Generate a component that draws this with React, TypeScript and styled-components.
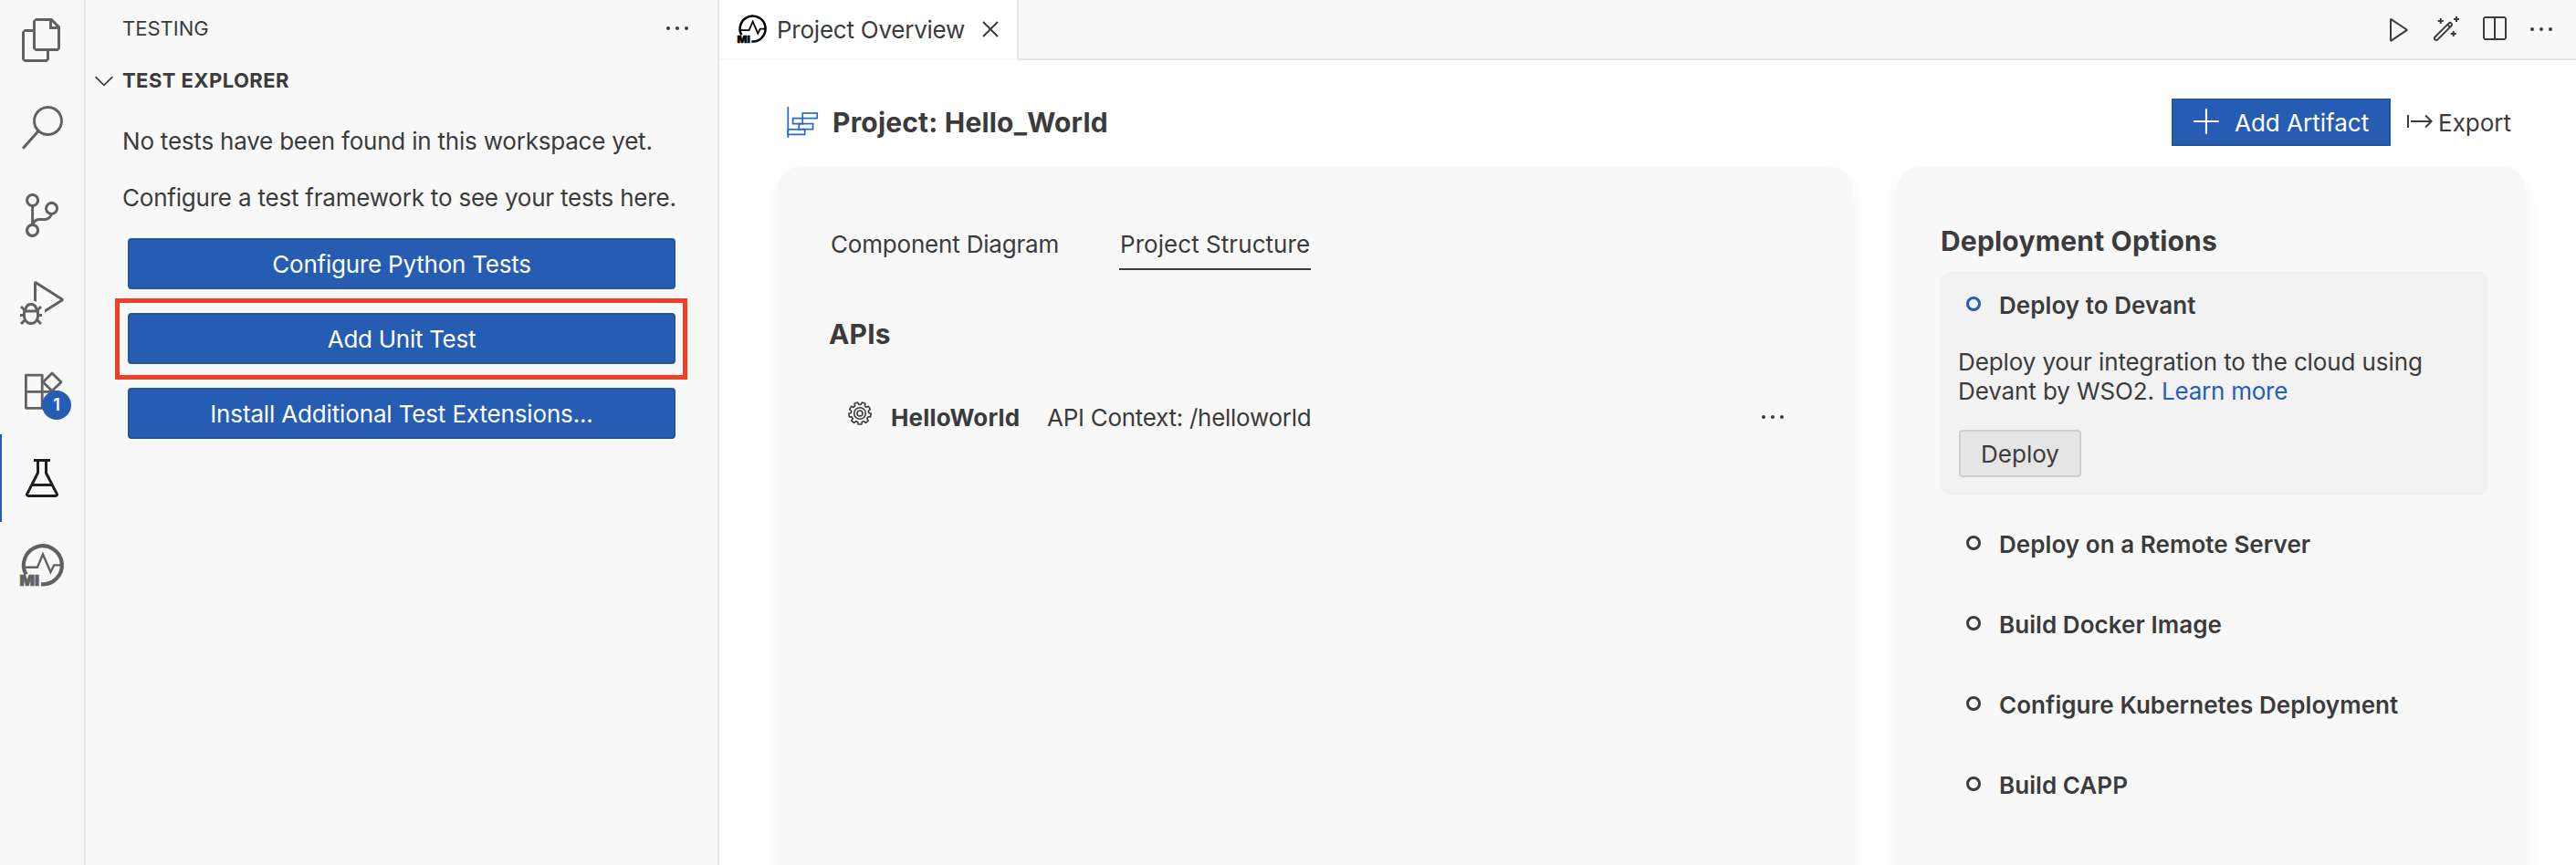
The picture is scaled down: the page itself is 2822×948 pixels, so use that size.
import React from "react";
import styled, { createGlobalStyle } from "styled-components";
import {
  VscAdd,
  VscBeaker,
  VscChevronDown,
  VscClose,
  VscDebugAlt,
  VscEllipsis,
  VscExport,
  VscFiles,
  VscPlay,
  VscSearch,
  VscSourceControl,
  VscSplitHorizontal,
  VscWand,
} from "react-icons/vsc";

const color = {
  text: "#3b3b3b",
  icon: "#616161",
  active: "#1f1f1f",
  border: "#e5e5e5",
  side: "#f8f8f8",
  accent: "#265db3",
  accentEdge: "#2455a1",
  link: "#265db8",
  mark: "#ec4128",
};

const GlobalStyle = createGlobalStyle`
  *, *::before, *::after { box-sizing: border-box; }
  body {
    margin: 0;
    background: #ffffff;
    color: ${color.text};
    font-family: Inter, "Liberation Sans", sans-serif;
    font-size: 26px;
  }
  h1, h2, p { margin: 0; }
  button { font: inherit; padding: 0; margin: 0; }
  svg { display: block; flex: none; overflow: visible; }
`;

const Workbench = styled.div`
  display: flex;
  width: 2822px;
  height: 948px;
  overflow: hidden;
`;

/* Activity bar */

const ActivityBar = styled.nav`
  display: flex;
  flex-direction: column;
  flex: none;
  width: 94px;
  height: 948px;
  overflow: hidden;
  background: ${color.side};
  border-right: 2px solid ${color.border};
`;

const ActivityList = styled.div`
  display: flex;
  flex-direction: column;
  margin-top: -4px;
`;

const ActivityItem = styled.div<{ $active?: boolean }>`
  position: relative;
  display: flex;
  align-items: center;
  justify-content: center;
  height: 96px;
  color: ${(p) => (p.$active ? color.active : color.icon)};
  box-shadow: ${(p) => (p.$active ? `inset 2px 0 0 ${color.accent}` : "none")};
`;

const Badge = styled.span`
  position: absolute;
  left: 46px;
  top: 48px;
  width: 32px;
  height: 32px;
  border-radius: 50%;
  background: ${color.accent};
  color: #ffffff;
  font-size: 18px;
  font-weight: 600;
  line-height: 32px;
  text-align: center;
`;

/* Testing sidebar */

const Sidebar = styled.aside`
  flex: none;
  width: 694px;
  background: ${color.side};
  border-right: 2px solid ${color.border};
`;

const SidebarHeader = styled.header`
  display: flex;
  align-items: center;
  justify-content: space-between;
  height: 62px;
  padding: 0 28px 0 40px;
  font-size: 22px;
`;

const SectionHeader = styled.div`
  display: flex;
  align-items: center;
  gap: 4px;
  height: 52px;
  padding-left: 4px;
  font-size: 22px;
  font-weight: 700;
  letter-spacing: 0.43px;
`;

const Welcome = styled.div`
  display: flex;
  flex-direction: column;
  gap: 26px;
  padding: 23px 46px 0;
`;

const WelcomeText = styled.p`
  margin-left: -6px;
  line-height: 36px;
  letter-spacing: -0.21px;
  white-space: nowrap;
`;

const WelcomeButton = styled.button<{ $spacing: number }>`
  display: block;
  width: 600px;
  height: 56px;
  padding-top: 1px;
  border: 2px solid ${color.accentEdge};
  border-radius: 4px;
  background: ${color.accent};
  color: #ffffff;
  letter-spacing: ${(p) => p.$spacing}px;
`;

const Highlighted = styled.div`
  position: relative;
  width: 600px;
  &::after {
    content: "";
    position: absolute;
    inset: -16.5px -13px -17px -14px;
    border: 5px solid ${color.mark};
  }
`;

/* Editor */

const Editor = styled.main`
  display: flex;
  flex-direction: column;
  flex: 1;
  min-width: 0;
  background: #ffffff;
`;

const TabBar = styled.div`
  display: flex;
  flex: none;
  height: 66px;
  background: ${color.side};
`;

const EditorTab = styled.div`
  display: flex;
  align-items: center;
  flex: none;
  width: 328px;
  padding-left: 20px;
  background: #ffffff;
  border-right: 2px solid ${color.border};
  border-bottom: 2px solid ${color.side};
`;

const IntegratorTabIcon = styled.span`
  display: flex;
  color: #000000;
`;

const EditorTabLabel = styled.span`
  width: 229px;
  padding-left: 11px;
  letter-spacing: -0.24px;
  white-space: nowrap;
`;

const EditorActions = styled.div`
  display: flex;
  flex: 1;
  align-items: center;
  justify-content: flex-end;
  gap: 20px;
  padding-right: 22px;
  border-bottom: 2px solid ${color.border};
`;

const ProjectHeader = styled.header`
  display: flex;
  align-items: center;
  flex: none;
  height: 116px;
  padding: 42px 71px 22px 74px;
`;

const ProjectTitle = styled.h1`
  flex: 1;
  margin-left: 16px;
  font-size: 30px;
  font-weight: 700;
  line-height: 36px;
  letter-spacing: 0.19px;
`;

const AddButton = styled.button`
  display: flex;
  align-items: center;
  gap: 13px;
  width: 240px;
  height: 52px;
  padding-left: 20px;
  border: 2px solid ${color.accentEdge};
  background: ${color.accent};
  color: #ffffff;
`;

const ExportLink = styled.div`
  display: flex;
  align-items: center;
  gap: 4px;
  width: 116px;
  margin-left: 16px;
  white-space: nowrap;
`;

const Panels = styled.div`
  display: flex;
  flex: none;
  gap: 48px;
  height: 900px;
  padding-left: 64px;
`;

const Card = styled.section<{ $width: number; $pad: string }>`
  flex: none;
  width: ${(p) => p.$width}px;
  padding: ${(p) => p.$pad};
  border-radius: 26px;
  background: ${color.side};
  box-shadow: 0 10px 20px rgba(0, 0, 0, 0.05);
`;

const ViewTabs = styled.div`
  display: flex;
  gap: 65px;
`;

const ViewTab = styled.div<{ $active?: boolean; $width: number; $spacing: number }>`
  width: ${(p) => p.$width}px;
  height: 48px;
  padding-left: 1px;
  line-height: 39px;
  letter-spacing: ${(p) => p.$spacing}px;
  white-space: nowrap;
  border-bottom: 2px solid ${(p) => (p.$active ? color.text : "transparent")};
`;

const GroupTitle = styled.h2`
  font-size: 30px;
  font-weight: 700;
  line-height: 36px;
  letter-spacing: 0.19px;
`;

const ApiList = styled.div`
  display: flex;
  flex-direction: column;
  padding-top: 52px;
  margin-left: -1px;
`;

const ApiRow = styled.div`
  display: flex;
  align-items: center;
  height: 42px;
  margin-top: 52px;
  padding: 0 72px 0 20px;
`;

const ApiIcon = styled.span`
  display: flex;
  align-items: center;
  height: 28px;
  margin-bottom: 8px;
`;

const ApiName = styled.strong`
  width: 171px;
  margin-left: 20px;
  font-weight: 700;
  letter-spacing: 0.16px;
`;

const ApiContext = styled.span`
  flex: 1;
  letter-spacing: -0.28px;
`;

const DeployCard = styled.div`
  width: 600px;
  height: 246px;
  margin-top: 15px;
  padding: 19px 20px 0;
  border-radius: 12px;
  background: #f2f2f2;
`;

const OptionHead = styled.div<{ $active?: boolean }>`
  display: flex;
  align-items: center;
  gap: 20px;
  padding-left: 8px;
  height: 36px;
  font-weight: 600;
  letter-spacing: 0.06px;
  white-space: nowrap;
  &::before {
    content: "";
    width: 16px;
    height: 16px;
    margin-bottom: 2px;
    border: 3px solid ${(p) => (p.$active ? color.link : color.text)};
    border-radius: 50%;
  }
`;

const OptionText = styled.p`
  margin-top: 29px;
  margin-left: -1px;
  line-height: 32px;
  letter-spacing: -0.11px;
  white-space: nowrap;
`;

const Link = styled.a`
  margin-left: 1px;
  color: ${color.link};
  letter-spacing: -0.25px;
`;

const DeployButton = styled.button`
  display: block;
  width: 134px;
  height: 52px;
  margin-top: 26px;
  padding-top: 1px;
  border: 2px solid #cecece;
  border-radius: 4px;
  background: #e5e5e5;
  color: ${color.text};
`;

const OptionList = styled.div`
  display: flex;
  flex-direction: column;
  gap: 52px;
  padding: 35px 20px 0;
`;

/* Icons */

function ExtensionsIcon() {
  return (
    <svg width="48" height="48" viewBox="0 0 48 48" fill="none" stroke="currentColor" strokeWidth="2.8" strokeLinejoin="round">
      <path d="M6.4 7.2H24.2V25.3H42V43.3H6.4Z M6.4 25.3H24.2V43.3" />
      <path d="M35 4.9L45 14.7L35 24.5L25.2 14.7Z" />
    </svg>
  );
}

function IntegratorIcon({ size, bold }: { size: number; bold?: boolean }) {
  const width = bold ? 3.8 : 4.2;
  return (
    <svg width={size} height={size} viewBox="0 0 48 48" fill="none" stroke="currentColor">
      <path d="M6.6 33.6A21 21 0 1 1 23 44.2" strokeWidth={width} />
      <path d="M4 25.7H18.9L25 11.5L33.4 31L37.2 23.4H46" strokeWidth={bold ? 2.6 : 2.4} />
      <text
        x="-0.6"
        y="46"
        fill="currentColor"
        stroke="currentColor"
        strokeWidth="0.7"
        fontFamily="Inter, sans-serif"
        fontSize="16"
        fontWeight="900"
        textLength="21.5"
        lengthAdjust="spacingAndGlyphs"
      >
        MI
      </text>
    </svg>
  );
}

function ProjectIcon() {
  return (
    <svg width="34" height="34" viewBox="0 0 34 34" fill="none" stroke="#2a66c8" strokeWidth="1.7">
      <path d="M1.3 0V34" />
      <rect x="17.2" y="7" width="16" height="5.6" />
      <path d="M17.2 12.6H6.6V18.6H17.2Z" />
      <rect x="13.2" y="18.6" width="15.4" height="6" />
      <rect x="1.3" y="24.8" width="18.4" height="5.6" />
    </svg>
  );
}

function gearOutline(teeth: number, inner: number, outer: number) {
  const step = (Math.PI * 2) / teeth;
  const at = (r: number, a: number) => `${(14 + r * Math.sin(a)).toFixed(2)} ${(14 - r * Math.cos(a)).toFixed(2)}`;
  const points: string[] = [];
  for (let i = 0; i < teeth; i++) {
    const mid = (i + 0.5) * step;
    points.push(at(inner, mid - step * 0.34), at(outer, mid - step * 0.22), at(outer, mid + step * 0.22), at(inner, mid + step * 0.34));
  }
  return `M${points.join("L")}Z`;
}

function ServiceIcon() {
  return (
    <svg width="28" height="28" viewBox="0 0 28 28" fill="none" stroke="currentColor" strokeWidth="1.6" strokeLinejoin="round">
      <path d={gearOutline(9, 9.7, 12.2)} />
      <circle cx="14" cy="14" r="6.3" />
      <circle cx="14" cy="14" r="3" />
    </svg>
  );
}

const remainingOptions = [
  "Deploy on a Remote Server",
  "Build Docker Image",
  "Configure Kubernetes Deployment",
  "Build CAPP",
];

export default function App() {
  return (
    <Workbench>
      <GlobalStyle />
      <ActivityBar>
        <ActivityList>
          <ActivityItem><VscFiles size={48} /></ActivityItem>
          <ActivityItem><VscSearch size={48} /></ActivityItem>
          <ActivityItem><VscSourceControl size={48} /></ActivityItem>
          <ActivityItem><VscDebugAlt size={48} /></ActivityItem>
          <ActivityItem>
            <ExtensionsIcon />
            <Badge>1</Badge>
          </ActivityItem>
          <ActivityItem $active><VscBeaker size={48} /></ActivityItem>
          <ActivityItem><IntegratorIcon size={48} /></ActivityItem>
        </ActivityList>
      </ActivityBar>

      <Sidebar>
        <SidebarHeader>
          <span>TESTING</span>
          <VscEllipsis size={32} />
        </SidebarHeader>
        <SectionHeader>
          <VscChevronDown size={32} />
          TEST EXPLORER
        </SectionHeader>
        <Welcome>
          <WelcomeText>No tests have been found in this workspace yet.</WelcomeText>
          <WelcomeText>Configure a test framework to see your tests here.</WelcomeText>
          <WelcomeButton $spacing={-0.22}>Configure Python Tests</WelcomeButton>
          <Highlighted>
            <WelcomeButton $spacing={-0.29}>Add Unit Test</WelcomeButton>
          </Highlighted>
          <WelcomeButton $spacing={-0.15}>Install Additional Test Extensions...</WelcomeButton>
        </Welcome>
      </Sidebar>

      <Editor>
        <TabBar>
          <EditorTab>
            <IntegratorTabIcon>
              <IntegratorIcon size={32} bold />
            </IntegratorTabIcon>
            <EditorTabLabel>Project Overview</EditorTabLabel>
            <VscClose size={32} />
          </EditorTab>
          <EditorActions>
            <VscPlay size={32} />
            <VscWand size={32} />
            <VscSplitHorizontal size={32} />
            <VscEllipsis size={32} />
          </EditorActions>
        </TabBar>

        <ProjectHeader>
          <ProjectIcon />
          <ProjectTitle>Project: Hello_World</ProjectTitle>
          <AddButton>
            <VscAdd size={34} />
            Add Artifact
          </AddButton>
          <ExportLink>
            <VscExport size={32} />
            Export
          </ExportLink>
        </ProjectHeader>

        <Panels>
          <Card $width={1178} $pad="66px 0 0 57px">
            <ViewTabs>
              <ViewTab $width={252} $spacing={-0.19}>Component Diagram</ViewTab>
              <ViewTab $active $width={210} $spacing={0.05}>Project Structure</ViewTab>
            </ViewTabs>
            <ApiList>
              <GroupTitle>APIs</GroupTitle>
              <ApiRow>
                <ApiIcon><ServiceIcon /></ApiIcon>
                <ApiName>HelloWorld</ApiName>
                <ApiContext>API Context: /helloworld</ApiContext>
                <VscEllipsis size={32} />
              </ApiRow>
            </ApiList>
          </Card>

          <Card $width={689} $pad="64px 0 0 48px">
            <GroupTitle>Deployment Options</GroupTitle>
            <DeployCard>
              <OptionHead $active>Deploy to Devant</OptionHead>
              <OptionText>
                Deploy your integration to the cloud using
                <br />
                Devant by WSO2. <Link>Learn more</Link>
              </OptionText>
              <DeployButton>Deploy</DeployButton>
            </DeployCard>
            <OptionList>
              {remainingOptions.map((label) => (
                <OptionHead key={label}>{label}</OptionHead>
              ))}
            </OptionList>
          </Card>
        </Panels>
      </Editor>
    </Workbench>
  );
}
